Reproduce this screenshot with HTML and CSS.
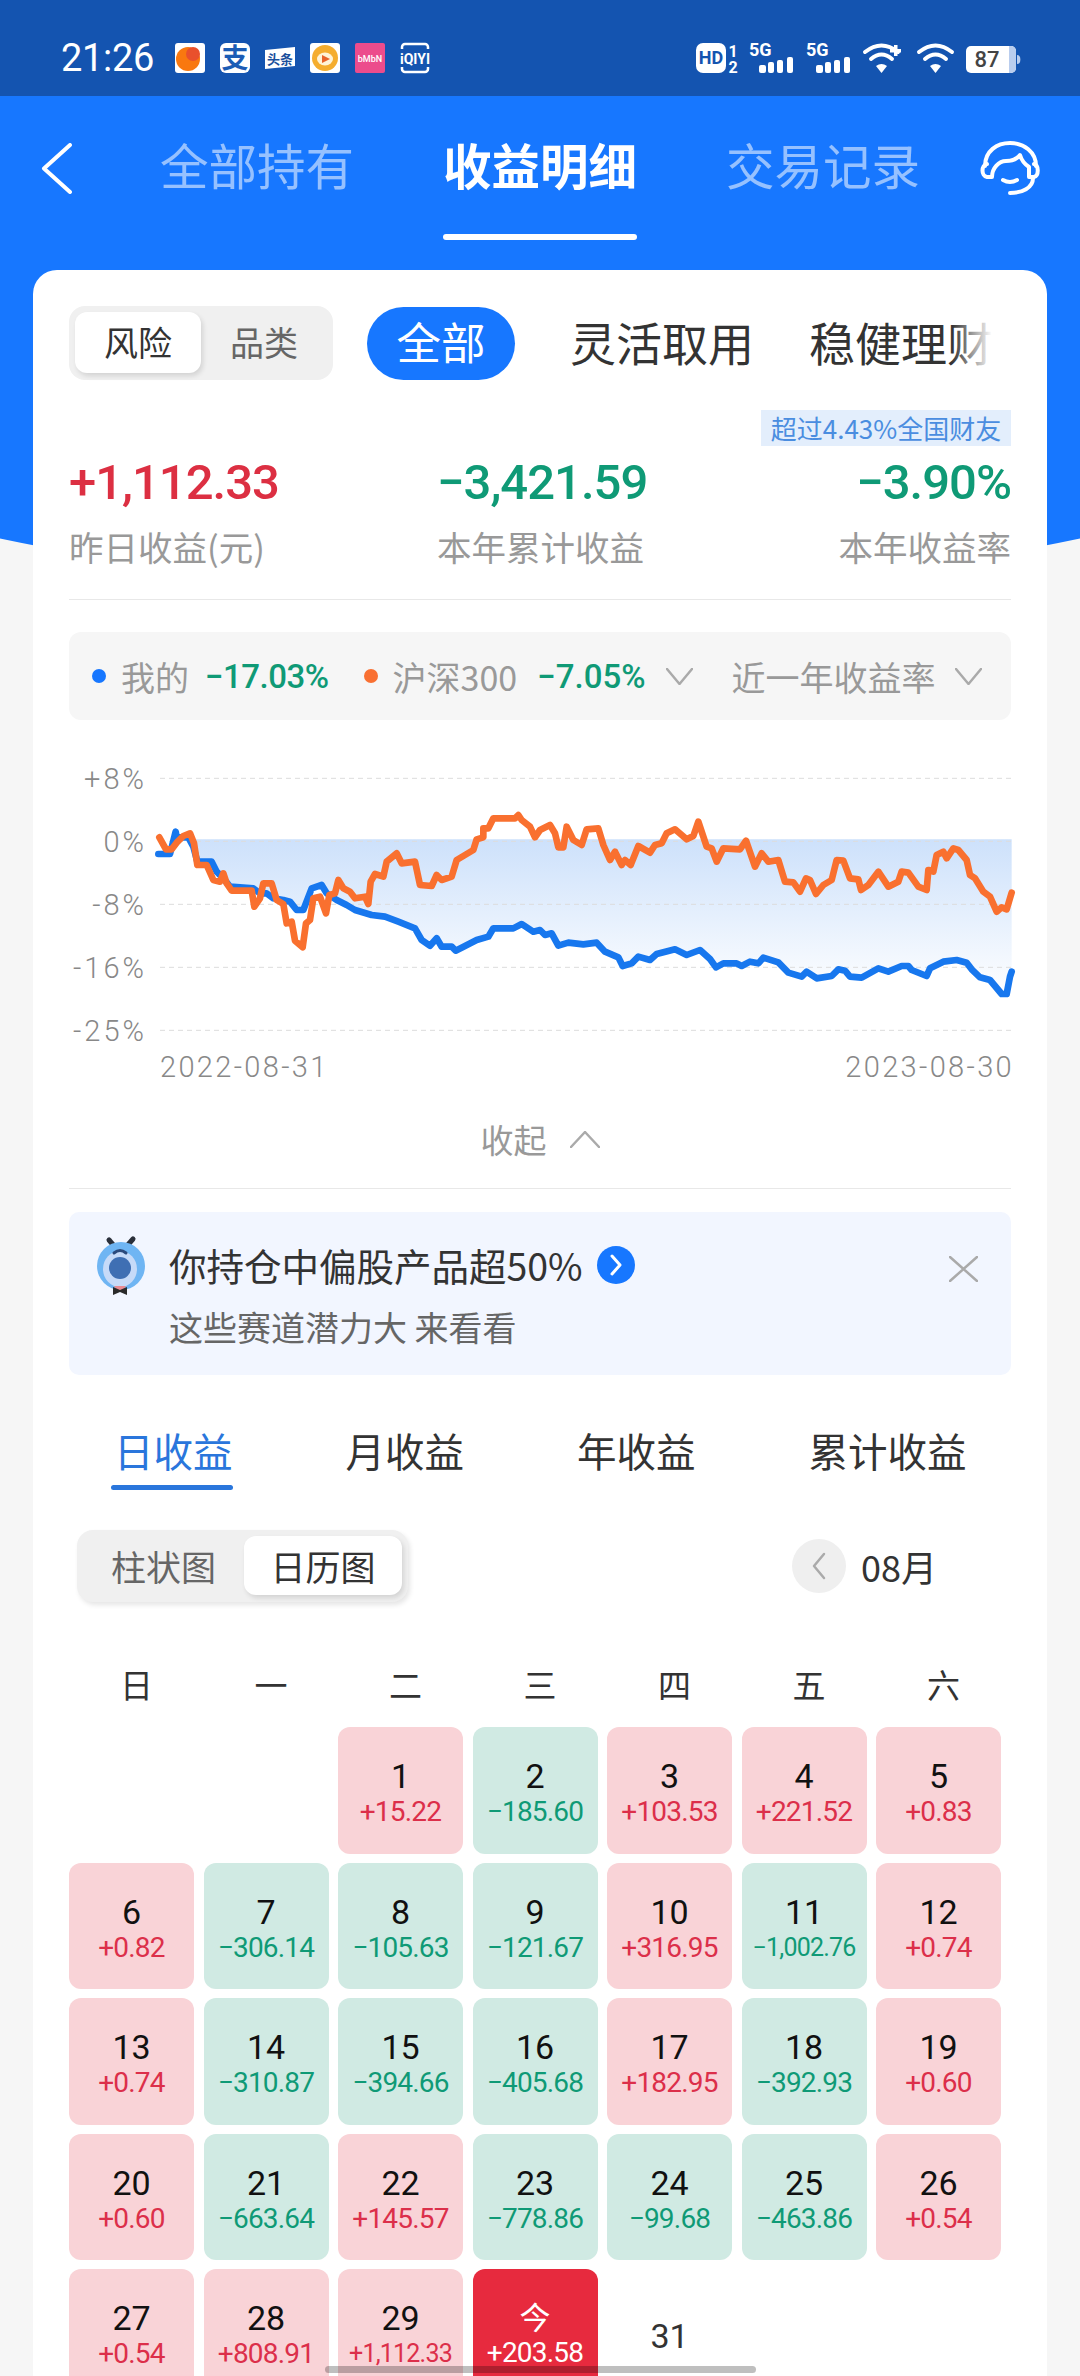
FILE: index.html
```html
<!DOCTYPE html>
<html lang="zh-CN">
<head>
  <meta charset="UTF-8" />
  <meta name="viewport" content="width=device-width, initial-scale=1.0"/>
  <title>收益明细</title>
  <link rel="stylesheet" href="styles.css">
</head>
<body>
<div class="page">

  <div class="statusbar">
    <div class="clock">21:26</div>
    <svg class="status-apps" width="280" height="50" viewBox="0 0 280 50">
      <rect x="10" y="8" width="30" height="30" rx="3" fill="#fff"/>
      <circle cx="23" cy="24" r="12" fill="#f9780f"/>
      <circle cx="28" cy="19" r="7" fill="#e9502c"/>
      <rect x="55" y="8" width="30" height="30" rx="6" fill="#fff"/>
      <text x="70" y="33" class="app-zhi">支</text>
      <polygon points="100,15 130,12 130,31 100,34" fill="#fff"/>
      <text x="115" y="29" class="app-tt">头条</text>
      <rect x="145" y="8" width="30" height="30" rx="3" fill="#fff"/>
      <circle cx="160" cy="23" r="13" fill="#f5ad2e"/>
      <ellipse cx="160" cy="24" rx="8" ry="6.500" fill="#fff3d6"/>
      <polygon points="157,20 165,24 157,28" fill="#e8622a"/>
      <rect x="190" y="8" width="30" height="30" rx="2" fill="#ec4c8c"/>
      <text x="205" y="27" class="app-bm">bMbN</text>
      <path d="M237 14v-2a3 3 0 0 1 3-3h20a3 3 0 0 1 3 3v2M237 32v2a3 3 0 0 0 3 3h20a3 3 0 0 0 3-3v-2" class="app-iq-line"/>
      <text x="250" y="28.500" class="app-iq">iQIYI</text>
    </svg>
    <svg class="status-right" width="340" height="50" viewBox="0 0 340 50">
      <rect x="6" y="8" width="30" height="30" rx="7" fill="#fff"/>
      <text x="21" y="29" class="st-hd">HD</text>
      <text x="43" y="22" class="st-small">1</text>
      <text x="43" y="38" class="st-small">2</text>
      <g id="sig">
        <text x="59" y="21" class="st-5g">5G</text>
        <rect x="69" y="30" width="7" height="8" rx="2" fill="#fff"/>
        <rect x="78" y="27" width="6" height="11" rx="2" fill="#fff"/>
        <rect x="87" y="25" width="6" height="13" rx="2" fill="#fff"/>
        <rect x="97" y="22" width="6" height="16" rx="2" fill="#fff"/>
      </g>
      <use href="#sig" x="57"/>
      <g id="wifi">
        <path d="M229 17Q245.500 4 262 17M235 24Q245.500 15 256 24" class="st-wifi"/>
        <path d="M240 31Q245.500 27 251 31L245.500 38Z" fill="#fff"/>
      </g>
      <use href="#wifi" x="-54"/>
      <rect x="200" y="14" width="11" height="3.500" fill="#fff"/>
      <rect x="204" y="10" width="3.500" height="11" fill="#fff"/>
      <rect x="276" y="11" width="50" height="27" rx="5" fill="#fff"/>
      <path d="M319 11h2a5 5 0 0 1 5 5v17a5 5 0 0 1-5 5h-2zM327 20a3 4 0 0 1 0 9z" fill="#b9cdee"/>
      <text x="297" y="32" class="st-batt">87</text>
    </svg>
  </div>

  <div class="topnav">
    <svg class="back" width="31" height="51" viewBox="0 0 31 51"><polyline points="29,2 3,25.500 29,49" class="line-white"/></svg>
    <div class="nav-tabs">
      <div class="nav-tab">全部持有</div>
      <div class="nav-tab active">收益明细</div>
      <div class="nav-tab">交易记录</div>
    </div>
    <svg class="headset" width="80" height="75" viewBox="0 0 80 75">
      <path d="M15 36C15 21 27 13 40 13C54 13 66 22 66 36" class="line-white"/>
      <path d="M17 34C11 35 11 46 17 47H22C22 38 29 31 36 31C42 31 47 29 50 25C52 32 56 35 59 37V47H64C69 46 69 35 64 34" class="line-white"/>
      <path d="M63 48C63 58 52 63 40 63M33 50Q40 54 47 50" class="line-white"/>
    </svg>
  </div>

  <div class="card">
    <div class="filter-row">
      <div class="seg">
        <div class="seg-item seg-on">风险</div>
        <div class="seg-item seg-off">品类</div>
      </div>
      <div class="filter-scroll">
        <div class="pill">全部</div>
        <div class="filter-item first">灵活取用</div>
        <div class="filter-item second">稳健理财</div>
      </div>
    </div>

    <div class="badge-row"><span class="badge">超过4.43%全国财友</span></div>

    <div class="stats">
      <div>
        <div class="stat-num red">+1,112.33</div>
        <div class="stat-label">昨日收益(元)</div>
      </div>
      <div>
        <div class="stat-num green">−3,421.59</div>
        <div class="stat-label">本年累计收益</div>
      </div>
      <div class="stat-right">
        <div class="stat-num green">−3.90%</div>
        <div class="stat-label">本年收益率</div>
      </div>
    </div>

    <div class="divider divider-stats"></div>

    <div class="legend">
      <span class="dot dot-blue"></span>
      <span class="legend-name">我的</span>
      <span class="legend-val">−17.03%</span>
      <span class="dot dot-orange"></span>
      <span class="legend-name">沪深300</span>
      <span class="legend-val legend-val-last">−7.05%</span>
      <svg class="legend-chev" width="27" height="17" viewBox="0 0 27 17"><polyline points="1,1 13.500,16 26,1" class="line-gray"/></svg>
      <span class="legend-name legend-range">近一年收益率</span>
      <svg class="legend-chev" width="27" height="17" viewBox="0 0 27 17"><polyline points="1,1 13.500,16 26,1" class="line-gray"/></svg>
    </div>

    <svg class="chart" width="960" height="340" viewBox="0 0 2880 1020">
      <defs>
        <linearGradient id="areaFill" gradientUnits="userSpaceOnUse" x1="0" y1="268" x2="0" y2="740">
          <stop offset="0" stop-color="#cde1fb"/>
          <stop offset="1" stop-color="#ffffff"/>
        </linearGradient>
      </defs>
      <path class="area" d="M400 268H2855V665L2850 680 2840 732 2825 732 2790 690 2760 682 2735 658 2720 638 2690 630 2650 635 2610 655 2600 678 2555 660 2545 648 2525 648 2485 665 2455 655 2405 683 2370 680 2355 662 2335 658 2315 678 2270 685 2240 665 2225 680 2185 668 2155 637 2110 623 2095 640 2070 635 2045 648 2030 640 1990 640 1968 652 1950 627 1920 600 1880 615 1845 598 1790 612 1770 630 1735 620 1715 640 1688 648 1675 622 1635 605 1610 578 1570 583 1525 578 1495 587 1475 550 1455 555 1440 540 1420 545 1385 522 1360 535 1300 535 1285 560 1250 570 1215 588 1187 602 1175 590 1145 590 1130 565 1110 587 1085 570 1065 535 1015 515 975 500 935 495 885 480 860 465 830 450 800 430 785 405 755 415 730 480 710 480 690 455 670 450 640 445 620 430 600 430 580 415 510 410 490 385 470 365 455 335 412 335Z"/>
      <g class="grid">
        <line x1="300" y1="85" x2="2855" y2="85"/>
        <line x1="300" y1="274" x2="2855" y2="274"/>
        <line x1="300" y1="463" x2="2855" y2="463"/>
        <line x1="300" y1="652" x2="2855" y2="652"/>
        <line x1="300" y1="841" x2="2855" y2="841"/>
      </g>
      <text x="261" y="117" class="axis-y">+8%</text>
      <text x="261" y="306" class="axis-y">0%</text>
      <text x="261" y="495" class="axis-y">-8%</text>
      <text x="261" y="684" class="axis-y">-16%</text>
      <text x="261" y="873" class="axis-y">-25%</text>
      <text x="300" y="980" class="axis-x">2022-08-31</text>
      <text x="2862" y="980" class="axis-x axis-x-end">2023-08-30</text>
      <polyline class="series series-blue" points="295,312 330,312 347,245 350,262 385,262 400,290 412,335 455,335 470,365 490,385 510,410 580,415 600,430 620,430 640,445 670,450 690,455 710,480 730,480 755,415 785,405 800,430 830,450 860,465 885,480 935,495 975,500 1015,515 1065,535 1085,570 1110,587 1130,565 1145,590 1175,590 1187,602 1215,588 1250,570 1285,560 1300,535 1360,535 1385,522 1420,545 1440,540 1455,555 1475,550 1495,587 1525,578 1570,583 1610,578 1635,605 1675,622 1688,648 1715,640 1735,620 1770,630 1790,612 1845,598 1880,615 1920,600 1950,627 1968,652 1990,640 2030,640 2045,648 2070,635 2095,640 2110,623 2155,637 2185,668 2225,680 2240,665 2270,685 2315,678 2335,658 2355,662 2370,680 2405,683 2455,655 2485,665 2525,648 2545,648 2555,660 2600,678 2610,655 2650,635 2690,630 2720,638 2735,658 2760,682 2790,690 2825,732 2840,732 2850,680 2855,665"/>
      <polyline class="series series-orange" points="298,262 318,298 335,298 350,278 370,258 390,250 402,280 412,345 440,345 460,390 480,395 490,370 500,400 515,422 575,422 583,470 600,445 610,400 635,400 650,450 670,462 680,520 695,515 705,572 728,592 738,520 750,510 760,445 780,440 798,490 808,435 825,430 835,390 850,415 870,425 885,445 915,440 925,462 932,395 945,372 970,380 980,335 1010,310 1025,340 1065,335 1080,405 1115,408 1130,375 1145,390 1175,380 1190,330 1215,315 1240,300 1250,268 1270,262 1270,235 1285,235 1300,205 1365,205 1375,195 1385,210 1410,230 1425,262 1440,240 1470,225 1485,250 1495,292 1510,292 1520,230 1540,270 1565,285 1580,238 1615,235 1630,285 1650,330 1665,305 1685,345 1695,330 1712,345 1735,288 1770,308 1785,285 1805,280 1820,250 1845,238 1880,268 1900,258 1915,215 1940,290 1955,295 1970,335 1990,295 2040,298 2058,272 2085,350 2105,310 2125,335 2155,330 2175,395 2200,397 2220,425 2238,385 2250,390 2268,432 2290,405 2315,390 2330,330 2350,332 2370,385 2395,388 2403,420 2425,405 2455,365 2485,410 2515,395 2525,365 2545,368 2575,410 2600,420 2605,360 2620,365 2630,315 2650,305 2660,325 2680,295 2695,300 2720,330 2730,375 2745,385 2770,425 2790,440 2810,485 2825,472 2840,478 2855,428"/>
    </svg>

    <div class="collapse">
      <span>收起</span>
      <svg width="30" height="17" viewBox="0 0 30 17"><polyline points="1,16 15,1 29,16" class="line-gray"/></svg>
    </div>

    <div class="divider"></div>

    <div class="promo">
      <svg class="mascot" width="70" height="75" viewBox="0 0 70 75">
        <line x1="30" y1="18" x2="24" y2="11" class="mascot-line"/>
        <line x1="41" y1="18" x2="48" y2="10" class="mascot-line"/>
        <ellipse cx="36" cy="37" rx="24" ry="24" fill="#6fb5f3"/>
        <ellipse cx="35" cy="40" rx="17" ry="18" fill="#c6daf8"/>
        <circle cx="35" cy="39" r="11" fill="#3f6fb3"/>
        <path d="M29 24Q35 19 41 24" class="mascot-brow"/>
        <path d="M29 57h12l-3 4h-6z" fill="#e98a92"/>
        <path d="M28 58l7 3 7-3v8l-7-3-7 3z" fill="#2a2a2a"/>
      </svg>
      <div class="promo-text">
        <div class="promo-title">
          <span>你持仓中偏股产品超50%</span>
          <svg class="promo-go" width="38" height="38" viewBox="0 0 38 38">
            <circle cx="19" cy="19" r="19" fill="#1777ff"/>
            <polyline points="15,10 23,19 15,28" class="line-white-thin"/>
          </svg>
        </div>
        <div class="promo-sub">这些赛道潜力大 来看看</div>
      </div>
      <svg class="promo-close" width="29" height="26" viewBox="0 0 29 26"><path d="M1 1L28 25M28 1L1 25" class="line-gray"/></svg>
    </div>

    <div class="sub-tabs">
      <div class="sub-tab active">日收益</div>
      <div class="sub-tab">月收益</div>
      <div class="sub-tab">年收益</div>
      <div class="sub-tab">累计收益</div>
    </div>

    <div class="view-row">
      <div class="seg seg-view">
        <div class="seg-item seg-off seg-bar">柱状图</div>
        <div class="seg-item seg-on seg-cal">日历图</div>
      </div>
      <div class="month">
        <span class="month-prev">
          <svg width="14" height="28" viewBox="0 0 14 28"><polyline points="12,2 2,14 12,26" class="line-gray"/></svg>
        </span>
        <span>08月</span>
      </div>
    </div>

    <div class="weekdays">
      <div>日</div><div>一</div><div>二</div><div>三</div><div>四</div><div>五</div><div>六</div>
    </div>

    <div class="calendar">
      <div></div>
      <div></div>
      <div class="day up"><b>1</b><span>+15.22</span></div>
      <div class="day down"><b>2</b><span>−185.60</span></div>
      <div class="day up"><b>3</b><span>+103.53</span></div>
      <div class="day up"><b>4</b><span>+221.52</span></div>
      <div class="day up"><b>5</b><span>+0.83</span></div>

      <div class="day up"><b>6</b><span>+0.82</span></div>
      <div class="day down"><b>7</b><span>−306.14</span></div>
      <div class="day down"><b>8</b><span>−105.63</span></div>
      <div class="day down"><b>9</b><span>−121.67</span></div>
      <div class="day up"><b>10</b><span>+316.95</span></div>
      <div class="day down"><b>11</b><span class="small">−1,002.76</span></div>
      <div class="day up"><b>12</b><span>+0.74</span></div>

      <div class="day up"><b>13</b><span>+0.74</span></div>
      <div class="day down"><b>14</b><span>−310.87</span></div>
      <div class="day down"><b>15</b><span>−394.66</span></div>
      <div class="day down"><b>16</b><span>−405.68</span></div>
      <div class="day up"><b>17</b><span>+182.95</span></div>
      <div class="day down"><b>18</b><span>−392.93</span></div>
      <div class="day up"><b>19</b><span>+0.60</span></div>

      <div class="day up"><b>20</b><span>+0.60</span></div>
      <div class="day down"><b>21</b><span>−663.64</span></div>
      <div class="day up"><b>22</b><span>+145.57</span></div>
      <div class="day down"><b>23</b><span>−778.86</span></div>
      <div class="day down"><b>24</b><span>−99.68</span></div>
      <div class="day down"><b>25</b><span>−463.86</span></div>
      <div class="day up"><b>26</b><span>+0.54</span></div>

      <div class="day up"><b>27</b><span>+0.54</span></div>
      <div class="day up"><b>28</b><span>+808.91</span></div>
      <div class="day up"><b>29</b><span class="small">+1,112.33</span></div>
      <div class="day today"><b>今</b><span>+203.58</span></div>
      <div class="day future"><b>31</b></div>
    </div>
  </div>

  <div class="home-bar"></div>
</div>
</body>
</html>
```

FILE: styles.css
```css
* {
  box-sizing: border-box;
}
html, body {
  margin: 0;
  padding: 0;
}
body {
  font-family: "Noto Sans CJK SC", Roboto, sans-serif;
  color: #333;
}
.page {
  position: relative;
  width: 1080px;
  height: 2376px;
  overflow: hidden;
  background: #f6f6f6;
}
/* blue backdrop with the curved bottom edge, sits behind the card */
.page::before {
  content: "";
  position: absolute;
  left: -160px;
  top: 96px;
  width: 1400px;
  height: 488px;
  background: #1777ff;
  border-radius: 0 0 50% 50% / 0 0 125px 125px;
}

/* status bar */
.statusbar {
  position: relative;
  display: flex;
  align-items: flex-start;
  height: 96px;
  padding: 35px 50px 0 61px;
  background: #1454b0;
  color: #fff;
}
.clock {
  width: 104px;
  font-family: Roboto, sans-serif;
  font-size: 38px;
  line-height: 47px;
  letter-spacing: -0.300px;
}
.status-right {
  margin-left: auto;
}
.app-zhi {
  font-size: 27px;
  font-weight: 700;
  text-anchor: middle;
  fill: #1b5cb5;
}
.app-tt {
  font-size: 13px;
  font-weight: 700;
  text-anchor: middle;
  fill: #1b4f9c;
}
.app-bm {
  font-family: Roboto, sans-serif;
  font-size: 9px;
  font-weight: 500;
  text-anchor: middle;
  fill: #fff;
}
.app-iq {
  font-family: Roboto, sans-serif;
  font-size: 14px;
  font-weight: 700;
  text-anchor: middle;
  fill: #fff;
}
.app-iq-line {
  fill: none;
  stroke: #fff;
  stroke-width: 2.5;
}
.st-hd, .st-small, .st-5g, .st-batt {
  font-family: Roboto, sans-serif;
  font-weight: 700;
}
.st-hd {
  font-size: 18px;
  text-anchor: middle;
  fill: #1454b0;
}
.st-small {
  font-size: 16px;
  text-anchor: middle;
  fill: #fff;
}
.st-5g {
  font-size: 18px;
  fill: #fff;
}
.st-wifi {
  fill: none;
  stroke: #fff;
  stroke-width: 4;
  stroke-linecap: round;
}
.st-batt {
  font-size: 22px;
  font-weight: 500;
  text-anchor: middle;
  fill: #444;
}

/* line icons */
.line-white, .line-white-thin, .line-gray {
  fill: none;
  stroke-linecap: round;
  stroke-linejoin: round;
}
.line-white {
  stroke: #fff;
  stroke-width: 4;
}
.line-white-thin {
  stroke: #fff;
  stroke-width: 3;
}
.line-gray {
  stroke: #aaa;
  stroke-width: 2.500;
}

/* top nav */
.topnav {
  position: relative;
  display: flex;
  align-items: flex-start;
  height: 174px;
  padding: 0 30px 0 41px;
}
.back {
  margin-top: 47px;
}
.nav-tabs {
  display: flex;
  gap: 89px;
  margin-left: 88px;
}
.nav-tab {
  width: 194px;
  padding-top: 42px;
  font-size: 48.500px;
  line-height: 52px;
  white-space: nowrap;
  color: rgba(255, 255, 255, 0.55);
}
.nav-tab.active {
  color: #fff;
  font-weight: 700;
}
.nav-tab.active::after {
  content: "";
  display: block;
  height: 6px;
  margin-top: 44px;
  border-radius: 3px;
  background: #fff;
}
.headset {
  margin: 34px 0 0 auto;
}

/* card */
.card {
  position: relative;
  width: 1014px;
  height: 2200px;
  margin-left: 33px;
  padding: 36px 36px 0;
  background: #fff;
  border-radius: 24px 24px 0 0;
}
.filter-row {
  display: flex;
  height: 74px;
}
.seg {
  display: flex;
  padding: 6px 6px 7px 6px;
  background: #f0f0f0;
  border-radius: 16px;
}
.seg-item {
  width: 126px;
  font-size: 34px;
  line-height: 60px;
  text-align: center;
  border-radius: 12px;
}
.seg-on {
  background: #fff;
  color: #333;
  box-shadow: 2px 3px 5px rgba(0, 0, 0, 0.12);
}
.seg-off {
  color: #666;
}
.filter-scroll {
  position: relative;
  display: flex;
  align-items: center;
  width: 625px;
  height: 74px;
  margin-left: 34px;
  overflow: hidden;
  white-space: nowrap;
}
.filter-scroll::after {
  content: "";
  position: absolute;
  right: 0;
  top: 0;
  width: 40px;
  height: 100%;
  background: linear-gradient(to right, rgba(255, 255, 255, 0), #fff);
}
.pill {
  flex: none;
  width: 148px;
  height: 73px;
  font-size: 44.500px;
  line-height: 68px;
  text-align: center;
  color: #fff;
  background: #1777ff;
  border-radius: 37px;
}
.filter-item {
  flex: none;
  margin-bottom: 4px;
  font-size: 46px;
}
.filter-item.first {
  margin-left: 55px;
}
.filter-item.second {
  margin-left: 55px;
}
.badge-row {
  display: flex;
  justify-content: flex-end;
  margin-top: 30px;
}
.badge {
  width: 250px;
  height: 36px;
  font-size: 26px;
  line-height: 35px;
  text-align: center;
  white-space: nowrap;
  color: #4a8de0;
  background: #e3eefc;
}

/* stats */
.stats {
  display: grid;
  grid-template-columns: 368px 1fr auto;
  margin-top: 9px;
}
.stat-num {
  font-family: Roboto, sans-serif;
  font-size: 49px;
  font-weight: 500;
  line-height: 56px;
  letter-spacing: -1px;
}
.stat-label {
  margin-top: 16px;
  font-size: 34.500px;
  line-height: 38px;
  color: #999;
}
.stat-right {
  text-align: right;
}
.red {
  color: #dc2f42;
}
.green {
  color: #0f9a76;
}
.divider {
  height: 1px;
  background: #e8e8e8;
}
.divider-stats {
  margin-top: 34px;
}

/* legend */
.legend {
  display: flex;
  align-items: center;
  height: 88px;
  margin-top: 32px;
  padding-left: 23px;
  background: #f6f6f6;
  border-radius: 12px;
  white-space: nowrap;
}
.dot {
  flex: none;
  width: 14px;
  height: 14px;
  margin-right: 15px;
  border-radius: 50%;
}
.dot-blue {
  background: #1777ff;
}
.dot-orange {
  background: #f97032;
}
.legend-name {
  font-size: 34px;
  color: #999;
}
.legend-val {
  margin: 0 35px 0 16px;
  font-family: Roboto, sans-serif;
  font-size: 33px;
  font-weight: 500;
  letter-spacing: -0.500px;
  color: #0f9a76;
}
.legend-val-last {
  margin: 0 20px 0 20px;
  letter-spacing: 0;
}
.legend-chev {
  flex: none;
}
.legend-range {
  margin: 0 19px 0 39px;
}

/* chart */
.chart {
  display: block;
  margin: 30px 0 0 -9px;
}
.area {
  fill: url(#areaFill);
}
.grid line {
  stroke: #dcdcdc;
  stroke-width: 3;
  stroke-dasharray: 15 12;
}
.axis-y, .axis-x {
  font-family: Roboto, sans-serif;
  font-size: 87px;
  font-weight: 300;
  fill: #888;
}
.axis-y {
  text-anchor: end;
  letter-spacing: 9px;
}
.axis-x {
  letter-spacing: 7px;
}
.axis-x-end {
  text-anchor: end;
}
.series {
  fill: none;
  stroke-width: 20;
  stroke-linejoin: round;
  stroke-linecap: round;
}
.series-blue {
  stroke: #1777ee;
}
.series-orange {
  stroke: #f9702f;
}
.collapse {
  display: flex;
  align-items: center;
  justify-content: center;
  gap: 23px;
  height: 98px;
  font-size: 33px;
  color: #999;
}

/* promo */
.promo {
  display: flex;
  align-items: flex-start;
  height: 163px;
  margin-top: 23px;
  padding-left: 16px;
  background: #f2f6ff;
  border-radius: 10px;
}
.mascot {
  flex: none;
  margin-top: 17px;
}
.mascot-line, .mascot-brow {
  fill: none;
  stroke: #2a2f3a;
  stroke-width: 5;
  stroke-linecap: round;
}
.mascot-brow {
  stroke: #2c4a7c;
  stroke-width: 3;
}
.promo-text {
  margin: 30px 0 0 14px;
}
.promo-title {
  display: flex;
  align-items: center;
  gap: 14px;
  font-size: 37.500px;
  line-height: 46px;
  color: #333;
}
.promo-sub {
  margin-top: 16px;
  font-size: 34px;
  line-height: 46px;
  color: #666;
}
.promo-close {
  margin: 44px 33px 0 auto;
}

/* income tabs */
.sub-tabs {
  display: flex;
  gap: 113px;
  margin-top: 52px;
  padding-left: 45px;
}
.sub-tab {
  padding-bottom: 17px;
  font-size: 39.500px;
  line-height: 46px;
}
.sub-tab.active {
  position: relative;
  color: #2a76dc;
}
.sub-tab.active::after {
  content: "";
  position: absolute;
  left: -3px;
  right: 0;
  bottom: 0;
  height: 5px;
  border-radius: 3px;
  background: #2a76dc;
}
.view-row {
  display: flex;
  align-items: center;
  justify-content: space-between;
  height: 72px;
  margin: 40px 0 0 8px;
  padding-right: 74px;
}
.seg-view {
  height: 72px;
  box-shadow: 2px 3px 5px rgba(0, 0, 0, 0.1);
}
.seg-bar {
  width: 161px;
  font-size: 35px;
}
.seg-cal {
  width: 158px;
  font-size: 35px;
}
.month {
  display: flex;
  align-items: center;
  gap: 15px;
  font-size: 36px;
}
.month-prev {
  display: flex;
  align-items: center;
  justify-content: center;
  width: 54px;
  height: 54px;
  background: #efefef;
  border-radius: 50%;
}

/* calendar */
.weekdays {
  display: grid;
  grid-template-columns: repeat(7, 125px);
  column-gap: 9.500px;
  height: 40px;
  margin: 62px 0 23px 5px;
  font-size: 33px;
  line-height: 40px;
  text-align: center;
}
.calendar {
  display: grid;
  grid-template-columns: repeat(7, 125px);
  grid-auto-rows: 126.500px;
  gap: 9px 9.500px;
}
.day {
  display: flex;
  flex-direction: column;
  align-items: center;
  padding-top: 30px;
  font-family: Roboto, sans-serif;
  border-radius: 12px;
}
.day b {
  font-size: 34px;
  font-weight: 400;
  line-height: 38px;
  color: #111;
}
.day span {
  margin-top: 1px;
  font-size: 28px;
  line-height: 32px;
  letter-spacing: -0.800px;
}
.day span.small {
  font-size: 25px;
}
.up {
  background: #f9d3d7;
  color: #dc2f4a;
}
.down {
  background: #d0eae3;
  color: #0f9a76;
}
.today {
  padding-top: 28px;
  background: #e72a3e;
  color: #fff;
}
.today b {
  font-family: "Noto Sans CJK SC", sans-serif;
  font-size: 31px;
  color: #fff;
}
.today span {
  margin-top: 2px;
}
.future {
  padding-top: 48px;
}
.future b {
  color: #333;
}
.home-bar {
  position: absolute;
  left: 325px;
  bottom: 3px;
  width: 431px;
  height: 7px;
  border-radius: 4px;
  background: rgba(0, 0, 0, 0.25);
}
```
